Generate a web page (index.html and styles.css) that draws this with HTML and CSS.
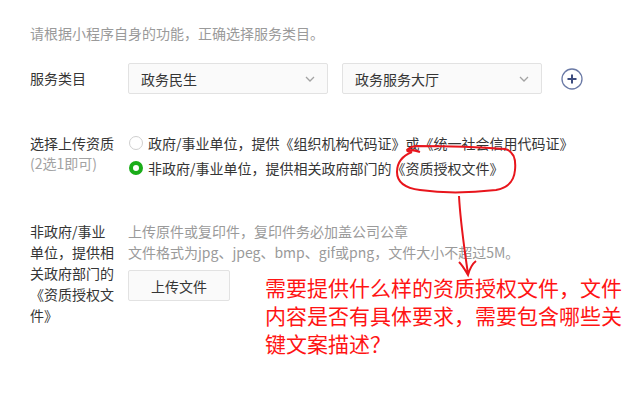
FILE: index.html
```html
<!DOCTYPE html>
<html lang="zh-CN">
<head>
  <meta charset="UTF-8">
  <title>服务类目</title>
  <link rel="stylesheet" href="styles.css">
</head>
<body>
  <div class="page">
    <p class="intro">请根据小程序自身的功能，正确选择服务类目。</p>

    <!-- 服务类目 -->
    <div class="form-row row-category">
      <div class="label">服务类目</div>
      <div class="controls">
        <div class="select">
          <span>政务民生</span>
          <svg class="chevron" width="10" height="6" viewBox="0 0 10 6"><path d="M1 1l4 4 4-4" fill="none" stroke="#a3a3a3" stroke-width="1.3"/></svg>
        </div>
        <div class="select">
          <span>政务服务大厅</span>
          <svg class="chevron" width="10" height="6" viewBox="0 0 10 6"><path d="M1 1l4 4 4-4" fill="none" stroke="#a3a3a3" stroke-width="1.3"/></svg>
        </div>
        <svg class="add" width="22" height="22" viewBox="0 0 22 22">
          <circle cx="11" cy="11" r="10" fill="none" stroke="#6b7aa6" stroke-width="1.3"/>
          <path d="M11 6.5v9M6.5 11h9" stroke="#3d4c7e" stroke-width="2"/>
        </svg>
      </div>
    </div>

    <!-- 选择上传资质 -->
    <div class="form-row row-qualify">
      <div class="label">选择上传资质<br><span class="muted">(2选1即可)</span></div>
      <div class="radios">
        <label class="radio"><span class="dot"></span>政府/事业单位，提供《组织机构代码证》或《统一社会信用代码证》</label>
        <label class="radio"><span class="dot checked"></span>非政府/事业单位，提供相关政府部门的《资质授权文件》</label>
      </div>
    </div>

    <!-- 上传 -->
    <div class="form-row row-upload">
      <div class="label narrow">非政府/事业单位，提供相关政府部门的《资质授权文件》</div>
      <div class="upload">
        <p class="hint">上传原件或复印件，复印件务必加盖公司公章<br>文件格式为jpg、jpeg、bmp、gif或png，文件大小不超过5M。</p>
        <button class="btn">上传文件</button>
      </div>
    </div>
  </div>

  <!-- 批注 -->
  <svg class="marks" width="636" height="406" viewBox="0 0 636 406">
    <path d="M420 152 C414 150 411 149 409 151 C405 152 408 147 416 146 C440 146 480 147 505 149 C514 151 516 160 515 170 C514 182 508 188 496 190 C470 193 440 193 420 190 C404 188 397 182 397 172 C397 162 402 156 412 152"
          fill="none" stroke="#e8151c" stroke-width="2"/>
    <path d="M459 196 C460 215 463 240 468 274 M459 262 C463 266 465 270 468 275 C470 268 472 264 476 261"
          fill="none" stroke="#e8151c" stroke-width="2"/>
  </svg>
  <div class="note">需要提供什么样的资质授权文件，文件<br>内容是否有具体要求，需要包含哪些关<br>键文案描述？</div>
</body>
</html>
```

FILE: styles.css
```css
/* Base */
body {
  margin: 0;
  background: #fff;
  color: #353535;
  font-family: "Noto Sans CJK SC", "Noto Sans", sans-serif;
  font-size: 14px;
  position: relative;
  width: 636px;
  height: 406px;
  overflow: hidden;
}
.page {
  padding: 22px 0 0 30px;
}
.intro {
  margin: 0;
  line-height: 22px;
  color: #9a9a9a;
}
/* Rows */
.form-row {
  display: flex;
}
.label {
  width: 98px;
  flex-shrink: 0;
  line-height: 21px;
}
.label.narrow {
  width: 86px;
  margin-right: 12px;
}
.muted {
  color: #a3a3a3;
}
.row-category {
  margin-top: 19px;
  align-items: center;
}
.controls {
  display: flex;
  align-items: center;
  gap: 14px;
}
.select {
  width: 198px;
  height: 29px;
  border: 1px solid #e2e2e2;
  border-radius: 2px;
  background: #fafafa;
  display: flex;
  align-items: center;
  justify-content: space-between;
  padding: 0 12px;
  box-sizing: content-box;
  width: 174px;
}
.add {
  margin-left: 5px;
}
/* Radios */
.row-qualify {
  margin-top: 39px;
}
.row-qualify .label {
  line-height: 20px;
}
.radios {
  display: flex;
  flex-direction: column;
  gap: 5px;
}
.radio {
  display: flex;
  align-items: center;
  line-height: 20px;
  white-space: nowrap;
}
.dot {
  width: 14px;
  height: 14px;
  border: 1px solid #cfcfcf;
  border-radius: 50%;
  box-sizing: border-box;
  margin: 0 5px 0 1px;
}
.dot.checked {
  border: 4px solid #1aad19;
}
/* Upload */
.row-upload {
  margin-top: 43px;
}
.hint {
  margin: 0;
  line-height: 21px;
  color: #9a9a9a;
}
.btn {
  margin-top: 7px;
  width: 102px;
  height: 31px;
  border: 1px solid #e2e2e2;
  border-radius: 2px;
  background: #fafafa;
  color: #353535;
  font-family: inherit;
  font-size: 14px;
}
/* Annotation overlay */
.marks {
  position: absolute;
  left: 0;
  top: 0;
  pointer-events: none;
}
.note {
  position: absolute;
  left: 265px;
  top: 273px;
  color: #ff1414;
  font-size: 21px;
  line-height: 28px;
  white-space: nowrap;
}
```
